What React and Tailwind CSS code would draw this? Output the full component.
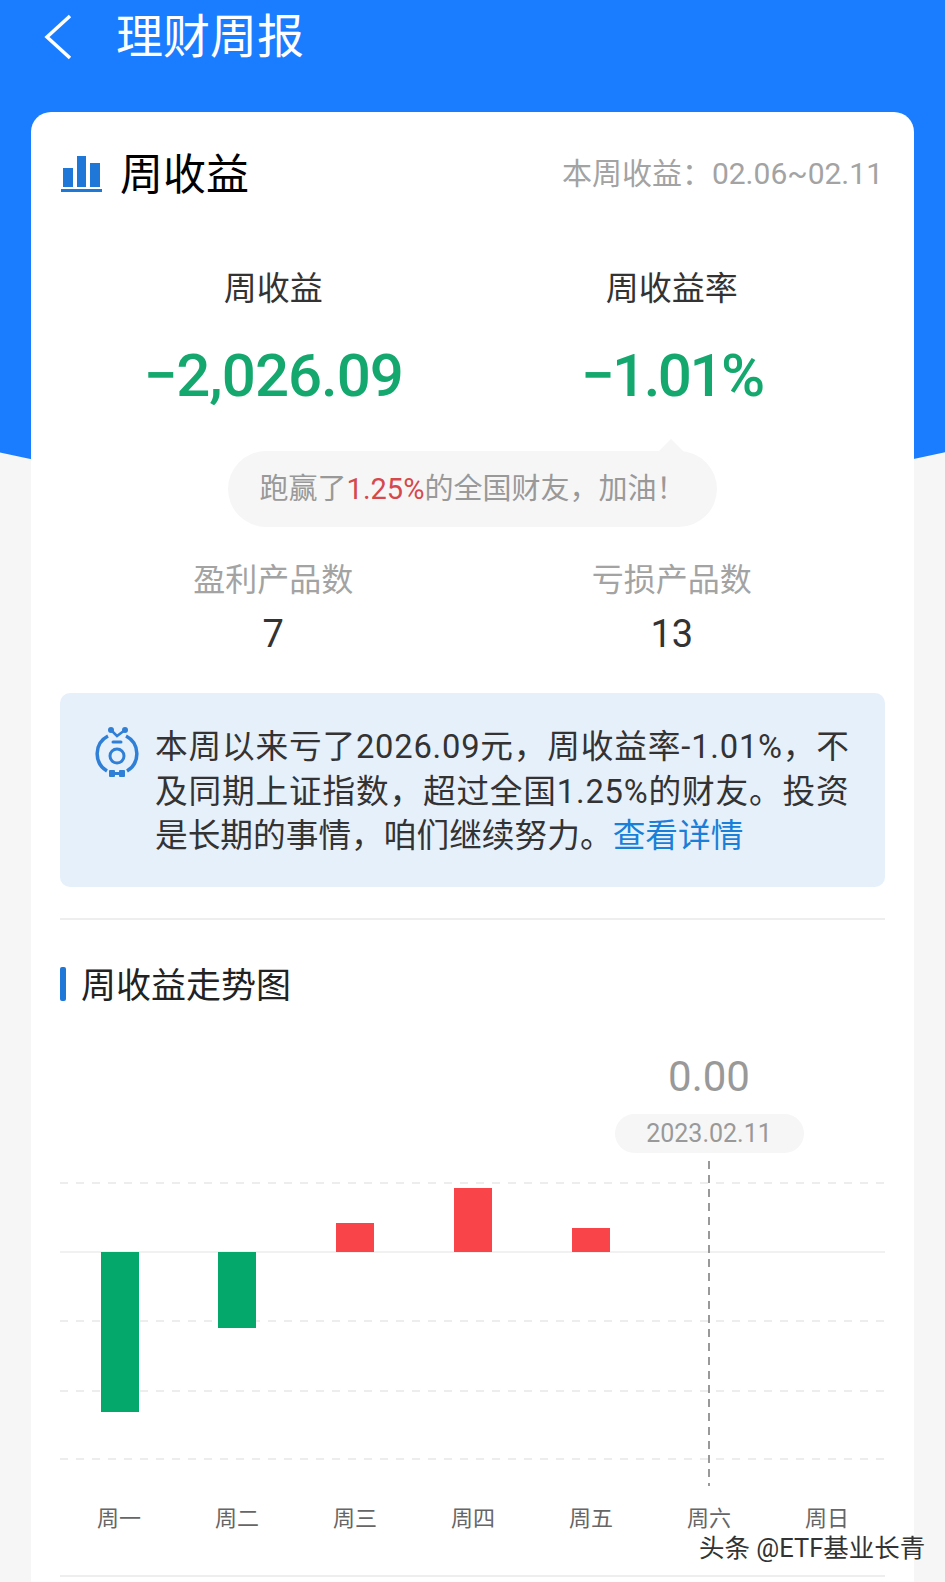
import React from 'react';

const weekDays = ['周一', '周二', '周三', '周四', '周五', '周六', '周日'];

// y is measured inside the chart svg
const bars = [
    { x: 41, y: 91, h: 160, color: '#04a86b' },
    { x: 158, y: 91, h: 76, color: '#04a86b' },
    { x: 276, y: 62, h: 29, color: '#f9444a' },
    { x: 394, y: 27, h: 64, color: '#f9444a' },
    { x: 512, y: 67, h: 24, color: '#f9444a' },
];

function RobotIcon() {
    return (
        <svg width="48" height="56" viewBox="0 0 48 56" fill="none">
            <path d="M15 14A20 20 0 0 0 14 49" stroke="#2f7fd6" strokeWidth="3.5" />
            <path d="M33 14A20 20 0 0 1 34 49" stroke="#2f7fd6" strokeWidth="3.5" />
            <circle cx="24" cy="34" r="7" stroke="#2f7fd6" strokeWidth="3" />
            <path d="M20 20h8" stroke="#2f7fd6" strokeWidth="3" strokeLinecap="round" />
            <path d="M18 8l6 6 8-6" stroke="#2f7fd6" strokeWidth="2.5" />
            <circle cx="18" cy="8" r="3" fill="#2f7fd6" />
            <circle cx="32" cy="8" r="3" fill="#2f7fd6" />
            <rect x="16" y="48" width="6" height="7" rx="1" fill="#2f7fd6" />
            <rect x="26" y="48" width="6" height="7" rx="1" fill="#2f7fd6" />
            <rect x="21" y="50" width="6" height="3" fill="#2f7fd6" />
        </svg>
    );
}

export default function App() {
    return (
        <div className="relative w-[945px] h-[1582px] overflow-hidden bg-[#f6f6f6] font-['Roboto','Noto_Sans_CJK_SC',sans-serif]">
            {/* Curved blue backdrop behind the card */}
            <div className="absolute left-[-1718px] top-[-3876px] w-[4380px] h-[4380px] rounded-full bg-[#1a7dff]"></div>

            <div className="relative">
                {/* Header */}
                <div className="h-[112px] text-white">
                    <div className="h-[73px] flex items-center">
                        <svg className="ml-[42px]" width="32" height="48" viewBox="0 0 32 48" fill="none">
                            <path d="M28 3L5 24l23 21" stroke="#fff" strokeWidth="3.5" />
                        </svg>
                        <h1 className="ml-[42px] text-[47px] leading-none font-normal">理财周报</h1>
                    </div>
                </div>

                <div className="mx-[31px] h-[1470px] rounded-t-[20px] bg-white px-[29px]">
                    {/* Card title */}
                    <div className="h-[122px] flex items-center justify-between">
                        <div className="flex items-center gap-[18px]">
                            <svg width="42" height="40" viewBox="0 0 42 40">
                                <rect x="3" y="15" width="10" height="19" fill="#1f77d8" />
                                <rect x="17" y="3" width="9" height="31" fill="#1f77d8" />
                                <rect x="30" y="10" width="10" height="24" fill="#1f77d8" />
                                <rect x="1" y="36" width="41" height="3" fill="#1f77d8" />
                            </svg>
                            <span className="pt-[4px] text-[43px] leading-none text-black">周收益</span>
                        </div>
                        <span className="pt-[2px] mr-[2px] text-[30px] leading-none text-[#a3a3a3]">本周收益：02.06~02.11</span>
                    </div>

                    {/* Weekly result */}
                    <div className="grid grid-cols-2 px-[14px]">
                        <div className="h-[217px] flex flex-col items-center">
                            <span className="mt-[38px] text-[33px] leading-none text-[#333]">周收益</span>
                            <span className="mt-[41px] text-[60px] leading-none font-medium tracking-[-1px] text-[#14a86e]">−2,026.09</span>
                        </div>
                        <div className="h-[217px] flex flex-col items-center">
                            <span className="mt-[38px] text-[33px] leading-none text-[#333]">周收益率</span>
                            <span className="mt-[41px] text-[60px] leading-none font-medium tracking-[-2.5px] text-[#14a86e]">−1.01%</span>
                        </div>
                    </div>

                    <div className="relative ml-[168px] w-[489px] h-[76px] rounded-full bg-[#f6f6f6] flex items-center justify-center text-[29px] leading-none text-[#999]">
                        <div className="absolute left-[429px] top-[-12px] h-0 w-0 border-x-[14px] border-b-[14px] border-x-transparent border-b-[#f6f6f6]"></div>
                        <span>跑赢了<span className="text-[#d5484e]">1.25%</span>的全国财友，加油！</span>
                    </div>

                    {/* Product counts */}
                    <div className="grid grid-cols-2 px-[14px] mt-[37px]">
                        <div className="flex flex-col items-center">
                            <span className="text-[32px] leading-none text-[#a3a3a3]">盈利产品数</span>
                            <span className="mt-[19px] text-[38px] leading-none text-[#333]">7</span>
                        </div>
                        <div className="flex flex-col items-center">
                            <span className="text-[32px] leading-none text-[#a3a3a3]">亏损产品数</span>
                            <span className="mt-[19px] text-[38px] leading-none text-[#333]">13</span>
                        </div>
                    </div>

                    {/* Summary */}
                    <div className="mt-[40px] h-[194px] rounded-[10px] bg-[#e6f0fb] pl-[33px] pt-[32px] flex gap-[14px]">
                        <div className="shrink-0 -mt-[3px]">
                            <RobotIcon />
                        </div>
                        <p className="text-[32.7px] leading-[44.5px] whitespace-nowrap text-[#333]">
                            <span className="tracking-[0.8px]">本周以来亏了2026.09元，周收益率-1.01%，不</span><br />
                            <span className="tracking-[0.8px]">及同期上证指数，超过全国1.25%的财友。投资</span><br />
                            是长期的事情，咱们继续努力。<span className="text-[#1a7fd8]">查看详情</span>
                        </p>
                    </div>

                    <div className="mt-[31px] h-[2px] bg-[#eeeeee]"></div>

                    {/* Trend chart */}
                    <div className="mt-[44px] flex items-center gap-[15px]">
                        <div className="w-[6px] h-[34px] rounded-[2px] bg-[#1f77d8]"></div>
                        <span className="pt-[5px] text-[35px] leading-none text-[#222]">周收益走势图</span>
                    </div>

                    <div className="mt-[53px] grid grid-cols-[repeat(7,118px)]">
                        <div className="col-start-6 flex flex-col items-center">
                            <span className="text-[42px] leading-[40px] text-[#999]">0.00</span>
                            <span className="mt-[17px] shrink-0 w-[189px] h-[39px] rounded-full bg-[#f6f6f6] flex items-center justify-center text-[25px] leading-none text-[#999]">2023.02.11</span>
                        </div>
                    </div>

                    <svg className="mt-[8px] block" width="825" height="330" viewBox="0 0 825 330">
                        {[22, 160, 230, 298].map((y) => (
                            <line key={y} x1="0" x2="825" y1={y} y2={y} stroke="#e8e8e8" strokeWidth="1.5" strokeDasharray="8 8" />
                        ))}
                        <line x1="0" x2="825" y1="91" y2="91" stroke="#ececec" strokeWidth="1.5" />
                        {bars.map((bar) => (
                            <rect key={bar.x} x={bar.x} y={bar.y} width="38" height={bar.h} fill={bar.color} />
                        ))}
                        <line x1="649" x2="649" y1="0" y2="325" stroke="#999" strokeWidth="2" strokeDasharray="8 6" />
                    </svg>

                    <div className="mt-[16px] grid grid-cols-[repeat(7,118px)]">
                        {weekDays.map((day) => (
                            <span key={day} className="text-center text-[22px] leading-[24px] text-[#666]">{day}</span>
                        ))}
                    </div>

                    <div className="mt-[44px] h-[2px] bg-[#eeeeee]"></div>
                </div>
            </div>

            {/* Watermark */}
            <div className="absolute left-[699px] top-[1534px] text-[25.5px] leading-[28px] whitespace-nowrap text-[#333] [text-shadow:0_0_2px_#fff,0_0_2px_#fff]">头条 @ETF基业长青</div>
        </div>
    );
}
